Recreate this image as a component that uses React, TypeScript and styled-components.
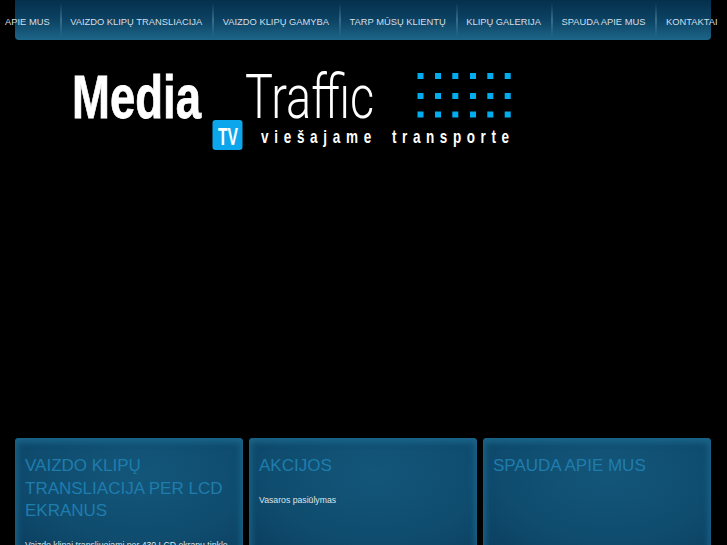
import React from 'react';
import styled, { createGlobalStyle } from 'styled-components';

const navItems = [
  'APIE MUS',
  'VAIZDO KLIPŲ TRANSLIACIJA',
  'VAIZDO KLIPŲ GAMYBA',
  'TARP MŪSŲ KLIENTŲ',
  'KLIPŲ GALERIJA',
  'SPAUDA APIE MUS',
  'KONTAKTAI',
];

const squareCols = [417.5, 435, 452.3, 470, 487.3, 504.7];
const squareRows = [73, 93, 111.5];

const GlobalStyle = createGlobalStyle`
  html, body {
    margin: 0;
    height: 100%;
    overflow: hidden;
    background: #000;
  }
  body {
    font-family: "Liberation Sans", Arial, sans-serif;
  }
`;

const Page = styled.div`
  width: 727px;
  height: 545px;
  overflow: hidden;
  padding: 0 16px 0 15px;
  box-sizing: border-box;
`;

const Nav = styled.nav`
  height: 40px;
  width: 696px;
  border-radius: 0 0 4px 4px;
  background: linear-gradient(to bottom, #04304c 0%, #0c4263 50%, #1d6689 100%);
`;

const NavList = styled.ul`
  display: flex;
  height: 40px;
  align-items: center;
  list-style: none;
  margin: 0 0 0 -20.5px;
  padding: 0;
  width: max-content;
`;

const NavItem = styled.li<{ $first?: boolean }>`
  display: flex;
  align-items: center;
  box-sizing: border-box;
  height: 34px;
  padding: 3px 10px 0 10.5px;
  flex-shrink: 0;
  color: #d5dfe5;
  font-size: 9.35px;
  white-space: nowrap;
  background: ${(p) =>
    p.$first
      ? 'none'
      : 'linear-gradient(to bottom, rgba(120,170,195,0) 0%, rgba(120,170,195,0.4) 50%, rgba(120,170,195,0) 100%) left center / 2px 100% no-repeat'};
`;

const Header = styled.header`
  height: 398px;
`;

const Logo = styled.svg`
  display: block;
  margin-left: -15px;
`;

const Cards = styled.section`
  display: grid;
  grid-template-columns: repeat(3, 228px);
  gap: 6px;
`;

const Card = styled.article`
  height: 200px;
  box-sizing: border-box;
  padding: 17px 10px;
  border-radius: 4px 4px 0 0;
  background: radial-gradient(ellipse 85% 60% at 55% 18%, #13567a 0%, #0f4c6e 55%, #0a3b5c 100%);
  box-shadow: inset 0 0 10px 1px #1a6185, inset 0 3px 6px #1d6a8f;
`;

const CardTitle = styled.h2`
  margin: 0 0 15px;
  color: #1f7dae;
  font-size: 17px;
  font-weight: normal;
  line-height: 22.5px;
`;

const CardText = styled.p`
  margin: 0;
  color: #dbe4e9;
  font-size: 8.7px;
  line-height: 14px;
`;

export default function App() {
  return (
    <>
      <GlobalStyle />
      <Page>
        <Nav>
          <NavList>
            {navItems.map((item, i) => (
              <NavItem key={item} $first={i === 0}>
                {item}
              </NavItem>
            ))}
          </NavList>
        </Nav>
        <Header>
          <Logo width="727" height="398" viewBox="0 40 727 398">
            <text
              x="72"
              y="118"
              fontFamily="'Liberation Sans', sans-serif"
              fontWeight="bold"
              fontSize="61"
              fill="#fff"
              stroke="#fff"
              strokeWidth="0.8"
              textLength="129"
              lengthAdjust="spacingAndGlyphs"
            >
              Media
            </text>
            <text
              x="245"
              y="118"
              fontFamily="Roboto, 'Open Sans', sans-serif"
              fontWeight="300"
              fontSize="62"
              fill="#fff"
              textLength="129"
              lengthAdjust="spacingAndGlyphs"
            >
              Traffic
            </text>
            <rect x="212.5" y="120" width="30" height="30" rx="3" fill="#0ca6ec" />
            <text
              x="218"
              y="145"
              fontFamily="'Liberation Sans', sans-serif"
              fontWeight="bold"
              fontSize="23"
              fill="#fff"
              textLength="20"
              lengthAdjust="spacingAndGlyphs"
            >
              TV
            </text>
            <text
              transform="translate(261 143) scale(0.75 1)"
              fontFamily="'Liberation Sans', sans-serif"
              fontWeight="bold"
              fontSize="18"
              fill="#fff"
              textLength="147"
            >
              viešajame
            </text>
            <text
              transform="translate(392 143) scale(0.75 1)"
              fontFamily="'Liberation Sans', sans-serif"
              fontWeight="bold"
              fontSize="18"
              fill="#fff"
              textLength="156"
            >
              transporte
            </text>
            {squareRows.map((y) =>
              squareCols.map((x) => (
                <rect key={`${x}-${y}`} x={x} y={y} width="6" height="6" fill="#00aeef" />
              ))
            )}
          </Logo>
        </Header>
        <Cards>
          <Card>
            <CardTitle>VAIZDO KLIPŲ TRANSLIACIJA PER LCD EKRANUS</CardTitle>
            <CardText>Vaizdo klipai transliuojami per 430 LCD ekranų tinkle</CardText>
          </Card>
          <Card>
            <CardTitle>AKCIJOS</CardTitle>
            <CardText>Vasaros pasiūlymas</CardText>
          </Card>
          <Card>
            <CardTitle>SPAUDA APIE MUS</CardTitle>
          </Card>
        </Cards>
      </Page>
    </>
  );
}
